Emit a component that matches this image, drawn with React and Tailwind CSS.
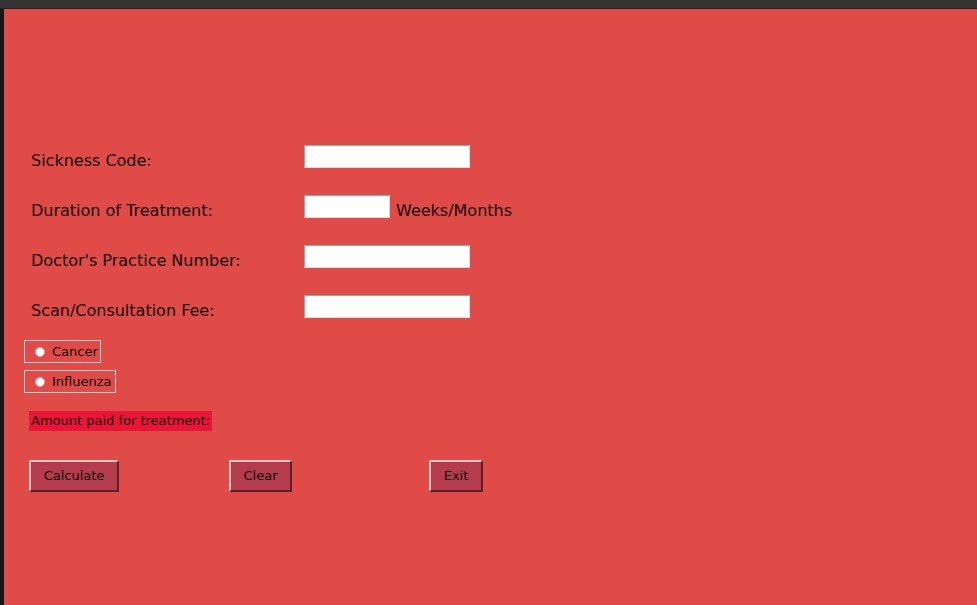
import React from "react";

const font = { fontFamily: '"DejaVu Sans", Verdana, sans-serif' };

function Row({ label, children }) {
  return (
    <div className="flex items-center h-[23px]">
      <div className="w-[300px] pl-[27px] pt-[9px] text-[16px] text-[#110808] leading-none">{label}</div>
      {children}
    </div>
  );
}

function Entry({ w }) {
  return (
    <div
      className={`h-[23px] bg-white border border-t-[#a3a3a3] border-l-[#a3a3a3] border-b-[#dcdcdc] border-r-[#dcdcdc] ${w}`}
    />
  );
}

function Radio({ label, w }) {
  return (
    <div className={`flex items-center h-[23px] border border-[#d4d4d4] pl-[10px] ${w}`}>
      <span className="w-[10px] h-[10px] rounded-full bg-white border border-[#e9a5a3]" />
      <span className="ml-[7px] text-[13px] text-[#110808] leading-none">{label}</span>
    </div>
  );
}

function Btn({ label, w }) {
  return (
    <div
      className={`h-[32px] flex items-center justify-center bg-[#b43c4d] border-2 border-t-[#ecc8c8] border-l-[#ecc8c8] border-b-[#5a2228] border-r-[#5a2228] text-[13px] text-[#110808] ${w}`}
    >
      {label}
    </div>
  );
}

export default function App() {
  return (
    <div className="w-[977px] h-[605px] flex flex-col bg-[#1a1a1a] overflow-hidden" style={font}>
      <div className="h-[9px] bg-[#333333] border-b border-[#222]" />
      <div className="flex flex-1">
        <div className="w-[4px] bg-[#161616]" />
        <div className="flex-1 bg-[#e04b47] flex flex-col pt-[136px]">
          <div className="flex flex-col gap-[27px]">
            <Row label="Sickness Code:">
              <Entry w="w-[166px]" />
            </Row>
            <Row label="Duration of Treatment:">
              <Entry w="w-[86px]" />
              <span className="ml-[6px] pt-[9px] text-[16px] text-[#110808] leading-none">Weeks/Months</span>
            </Row>
            <Row label="Doctor's Practice Number:">
              <Entry w="w-[166px]" />
            </Row>
            <Row label="Scan/Consultation Fee:">
              <Entry w="w-[166px]" />
            </Row>
          </div>
          <div className="pl-[20px] mt-[22px] flex flex-col gap-[7px]">
            <Radio label="Cancer" w="w-[77px]" />
            <Radio label="Influenza" w="w-[92px]" />
          </div>
          <div className="pl-[25px] mt-[18px] flex">
            <div className="h-[20px] px-[2px] bg-[#ec1439] text-[13px] text-[#110808] flex items-center">
              Amount paid for treatment:
            </div>
          </div>
          <div className="pl-[25px] mt-[29px] grid grid-cols-[200px_200px_200px]">
            <div><Btn label="Calculate" w="w-[90px]" /></div>
            <div><Btn label="Clear" w="w-[63px]" /></div>
            <div><Btn label="Exit" w="w-[54px]" /></div>
          </div>
        </div>
      </div>
    </div>
  );
}
